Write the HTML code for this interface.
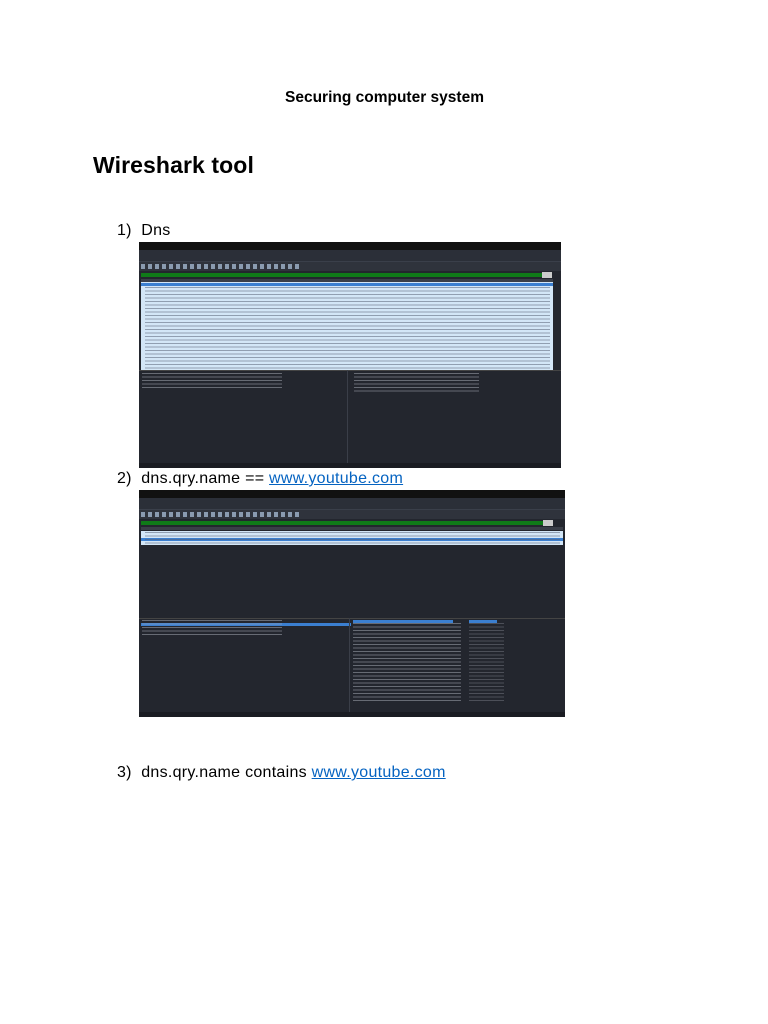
<!DOCTYPE html>
<html><head><meta charset="utf-8"><style>
*{margin:0;padding:0;box-sizing:border-box}
body{width:768px;height:1024px;background:#fff;position:relative;overflow:hidden;font-family:"Liberation Sans",sans-serif;color:#000}
.a{position:absolute;white-space:nowrap}
.t{font-size:16px;line-height:18px;letter-spacing:0.28px}
a{color:#0563c1;text-decoration:underline}
.ws{position:absolute;background:#23262e;overflow:hidden}
.bar{position:absolute;left:0;right:0}
.lines{position:absolute;background-image:repeating-linear-gradient(to bottom,rgba(90,100,120,.55) 0 1px,transparent 1px 3.5px)}
.dl{position:absolute;background-image:repeating-linear-gradient(to bottom,rgba(170,175,185,.5) 0 1px,transparent 1px 3.5px)}
</style></head><body>
<div class="a" style="left:285px;top:89px;font-size:15.5px;font-weight:bold;line-height:18px">Securing computer system</div>
<div class="a" style="left:93px;top:152px;font-size:23px;font-weight:bold;line-height:26px;letter-spacing:0.1px">Wireshark tool</div>
<div class="a t" style="left:117px;top:222px">1)&nbsp;&nbsp;Dns</div>
<div class="a t" style="left:117px;top:470px">2)&nbsp;&nbsp;dns.qry.name == <a>www.youtube.com</a></div>
<div class="a t" style="left:117px;top:764px">3)&nbsp;&nbsp;dns.qry.name contains <a>www.youtube.com</a></div>

<!-- screenshot 1 -->
<div class="ws" style="left:139px;top:242px;width:422px;height:226px">
 <div class="bar" style="top:0;height:8px;background:#111"></div>
 <div class="bar" style="top:8px;height:7px;background:#2b2f38"></div>
 <div class="bar" style="top:15px;height:5px;background:#2b2f38;border-bottom:1px solid #3a3f4a"></div>
 <div class="bar" style="top:20px;height:9px;background:#2f333c"></div>
 <div style="position:absolute;left:2px;top:22px;width:160px;height:5px;background:repeating-linear-gradient(to right,#8a9bb0 0 4px,transparent 4px 7px)"></div>
 <div style="position:absolute;left:2px;top:31px;width:410px;height:4px;background:#0f7a18"></div>
 <div style="position:absolute;left:403px;top:30px;width:10px;height:6px;background:#ccc"></div>
 <div style="position:absolute;left:2px;top:37px;width:412px;height:3px;background:#3a3e48"></div>
 <div style="position:absolute;left:2px;top:40px;width:412px;height:88px;background:#d3e6f7"></div>
 <div style="position:absolute;left:2px;top:41px;width:412px;height:3px;background:#3b7fd0"></div>
 <div class="lines" style="left:6px;top:45px;width:405px;height:82px"></div>
 <div style="position:absolute;left:0;top:128px;width:422px;height:1px;background:#444"></div>
 <div class="dl" style="left:3px;top:131px;width:140px;height:16px"></div>
 <div style="position:absolute;left:208px;top:128px;width:1px;height:93px;background:#3a3e48"></div>
 <div class="dl" style="left:215px;top:131px;width:125px;height:20px"></div>
 <div class="bar" style="top:221px;height:5px;background:#1a1c22"></div>
</div>

<!-- screenshot 2 -->
<div class="ws" style="left:139px;top:490px;width:426px;height:227px">
 <div class="bar" style="top:0;height:8px;background:#111"></div>
 <div class="bar" style="top:8px;height:7px;background:#2b2f38"></div>
 <div class="bar" style="top:15px;height:5px;background:#2b2f38;border-bottom:1px solid #3a3f4a"></div>
 <div class="bar" style="top:20px;height:9px;background:#2f333c"></div>
 <div style="position:absolute;left:2px;top:22px;width:160px;height:5px;background:repeating-linear-gradient(to right,#8a9bb0 0 4px,transparent 4px 7px)"></div>
 <div style="position:absolute;left:2px;top:31px;width:402px;height:4px;background:#0f7a18"></div>
 <div style="position:absolute;left:404px;top:30px;width:10px;height:6px;background:#ccc"></div>
 <div style="position:absolute;left:2px;top:37px;width:422px;height:3px;background:#3a3e48"></div>
 <div style="position:absolute;left:2px;top:41px;width:422px;height:14px;background:#d3e6f7"></div>
 <div style="position:absolute;left:2px;top:48px;width:422px;height:3px;background:#3b7fd0"></div>
 <div class="lines" style="left:6px;top:42px;width:415px;height:12px"></div>
 <div style="position:absolute;left:0;top:128px;width:426px;height:1px;background:#444"></div>
 <div style="position:absolute;left:2px;top:133px;width:210px;height:3px;background:#3b7fd0"></div>
 <div class="dl" style="left:3px;top:130px;width:140px;height:16px"></div>
 <div style="position:absolute;left:210px;top:128px;width:1px;height:94px;background:#3a3e48"></div>
 <div style="position:absolute;left:214px;top:130px;width:100px;height:3px;background:#3b7fd0"></div>
 <div style="position:absolute;left:330px;top:130px;width:28px;height:3px;background:#3b7fd0"></div>
 <div class="dl" style="left:214px;top:133px;width:108px;height:80px"></div>
 <div class="dl" style="left:330px;top:133px;width:35px;height:80px;opacity:.6"></div>
 <div class="bar" style="top:222px;height:5px;background:#1a1c22"></div>
</div>
</body></html>
